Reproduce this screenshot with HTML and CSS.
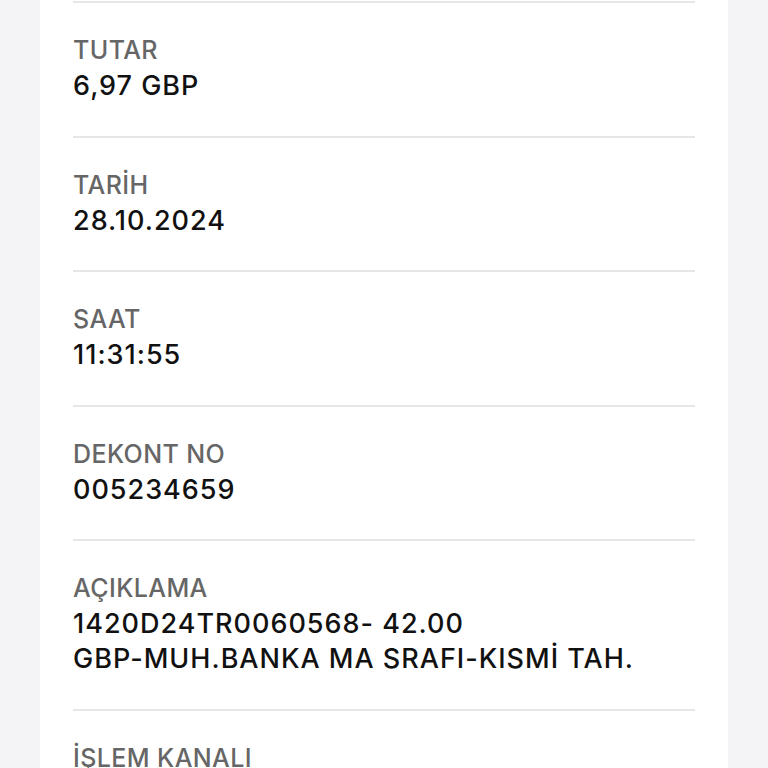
FILE: index.html
```html
<!DOCTYPE html>
<html lang="tr">
<head>
<meta charset="utf-8">
<link rel="stylesheet" href="styles.css">
</head>
<body>
<div class="card">
  <div class="row">
    <div class="label">TUTAR</div>
    <div class="value">6,97 GBP</div>
  </div>
  <div class="row">
    <div class="label">TARİH</div>
    <div class="value">28.10.2024</div>
  </div>
  <div class="row">
    <div class="label">SAAT</div>
    <div class="value">11:31:55</div>
  </div>
  <div class="row">
    <div class="label">DEKONT NO</div>
    <div class="value">005234659</div>
  </div>
  <div class="row">
    <div class="label">AÇIKLAMA</div>
    <div class="value">1420D24TR0060568- 42.00<br>GBP-MUH.BANKA MA SRAFI-KISMİ TAH.</div>
  </div>
  <div class="row">
    <div class="label">İŞLEM KANALI</div>
  </div>
</div>
</body>
</html>
```

FILE: styles.css
```css
html, body {
  margin: 0;
  padding: 0;
  background: #f4f4f6;
  height: 768px;
  overflow: hidden;
}
.card {
  margin: 0 40px;
  background: #ffffff;
  padding: 1px 33px 0;
  height: 900px;
  font-family: Inter, "Liberation Sans", sans-serif;
}
.row {
  border-top: 2px solid #e6e6e8;
  padding: 29px 0 32.5px;
}
.label {
  font-size: 25px;
  line-height: 36px;
  font-weight: 500;
  letter-spacing: 0.4px;
  color: #666666;
}
.value {
  font-size: 27px;
  line-height: 35px;
  font-weight: 500;
  letter-spacing: 1px;
  color: #111111;
}
```
